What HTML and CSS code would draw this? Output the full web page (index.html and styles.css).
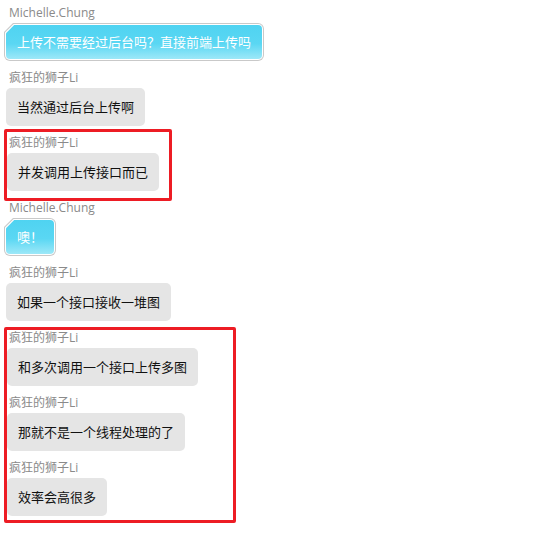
FILE: index.html
```html
<!DOCTYPE html>
<html lang="zh-CN">
<head>
<meta charset="utf-8">
<title>Chat</title>
<link rel="stylesheet" href="styles.css">
</head>
<body>
<div class="chat">
  <div class="msg">
    <div class="name">Michelle.Chung</div>
    <div class="blue"><div class="blue-mid"><div class="blue-in">上传不需要经过后台吗？直接前端上传吗</div></div></div>
  </div>
  <div class="msg">
    <div class="name">疯狂的狮子Li</div>
    <div class="gray">当然通过后台上传啊</div>
  </div>
  <div class="box box-one">
    <div class="msg">
      <div class="name">疯狂的狮子Li</div>
      <div class="gray">并发调用上传接口而已</div>
    </div>
  </div>
  <div class="msg">
    <div class="name">Michelle.Chung</div>
    <div class="blue"><div class="blue-mid"><div class="blue-in">噢！</div></div></div>
  </div>
  <div class="msg">
    <div class="name">疯狂的狮子Li</div>
    <div class="gray">如果一个接口接收一堆图</div>
  </div>
  <div class="box box-two">
    <div class="msg">
      <div class="name">疯狂的狮子Li</div>
      <div class="gray">和多次调用一个接口上传多图</div>
    </div>
    <div class="msg">
      <div class="name">疯狂的狮子Li</div>
      <div class="gray">那就不是一个线程处理的了</div>
    </div>
    <div class="msg">
      <div class="name">疯狂的狮子Li</div>
      <div class="gray">效率会高很多</div>
    </div>
  </div>
</div>
</body>
</html>
```
FILE: styles.css
```css
html, body {
  margin: 0;
  padding: 0;
  background: #fff;
}

.chat {
  display: flex;
  flex-direction: column;
  align-items: flex-start;
  gap: 9px;
  padding: 5px 0 0 6px;
  font-family: "Open Sans", "Noto Sans CJK SC", sans-serif;
}

.msg {
  display: flex;
  flex-direction: column;
  align-items: flex-start;
}

.name {
  font-size: 12px;
  line-height: 16px;
  height: 16px;
  color: #8a8a8a;
  padding-left: 3px;
  margin-bottom: 2px;
  white-space: nowrap;
}

.box .name {
  padding-left: 2px;
}

.gray {
  position: relative;
  background: #e5e5e5;
  border-radius: 5px;
  padding: 10px 11px;
  font-family: "Noto Sans CJK SC", sans-serif;
  font-size: 13px;
  line-height: 18px;
  color: #111;
  white-space: nowrap;
}

.gray::before {
  content: "";
  position: absolute;
  left: -6px;
  top: 7px;
  width: 0;
  height: 0;
  border-top: 7px solid #ececec;
  border-left: 6px solid transparent;
  z-index: -1;
}

.blue {
  margin-left: -2px;
  background: #c9c9c9;
  padding: 1px;
  border-radius: 6px;
  clip-path: polygon(9px 0, 100% 0, 100% 100%, 0 100%, 0 9px);
}

.blue-mid {
  background: #fff;
  padding: 1px;
  border-radius: 5px;
  clip-path: polygon(8.6px 0, 100% 0, 100% 100%, 0 100%, 0 8.6px);
}

.blue-in {
  background: linear-gradient(to bottom, #4fd3f1 0%, #5ad7f3 55%, #9de8f8 100%);
  border-radius: 4px;
  clip-path: polygon(8.2px 0, 100% 0, 100% 100%, 0 100%, 0 8.2px);
  padding: 8px 11px;
  font-family: "Noto Sans CJK SC", sans-serif;
  font-size: 13px;
  line-height: 18px;
  color: #fff;
  white-space: nowrap;
}

.box {
  display: flex;
  flex-direction: column;
  align-items: flex-start;
  gap: 9px;
  border: 3px solid #ed1c24;
  border-radius: 2px;
  margin-left: -2px;
  box-sizing: border-box;
}

.box-one {
  width: 168px;
  padding: 3px 0 7px 0;
  margin-top: -6px;
  margin-bottom: -10px;
}

.box-two {
  width: 232px;
  padding: 0 0 4px 0;
  margin-top: -3px;
}
```
